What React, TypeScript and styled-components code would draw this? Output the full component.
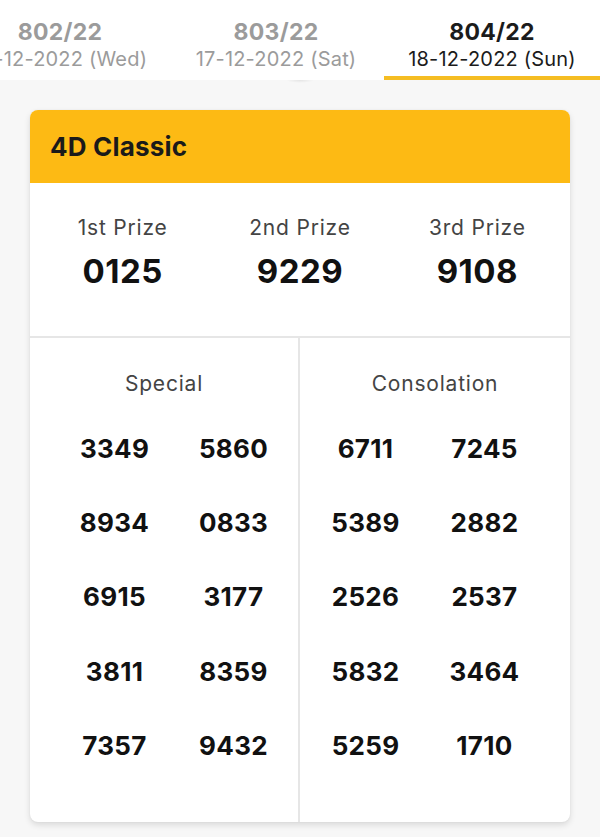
import styled, { createGlobalStyle } from 'styled-components'

const GlobalStyle = createGlobalStyle`
  html, body {
    margin: 0;
    padding: 0;
    background: #f7f7f7;
    font-family: Inter, "Noto Sans", Roboto, sans-serif;
  }
`

const draws = [
  { no: '802/22', date: '14-12-2022 (Wed)' },
  { no: '803/22', date: '17-12-2022 (Sat)' },
  { no: '804/22', date: '18-12-2022 (Sun)' },
]

const topPrizes = [
  { label: '1st Prize', num: '0125' },
  { label: '2nd Prize', num: '9229' },
  { label: '3rd Prize', num: '9108' },
]

const special = ['3349', '5860', '8934', '0833', '6915', '3177', '3811', '8359', '7357', '9432']
const consolation = ['6711', '7245', '5389', '2882', '2526', '2537', '5832', '3464', '5259', '1710']

const App = () => {
  return (
    <Page>
      <GlobalStyle />
      <TabBar>
        <TabRow>
          {draws.map((d, i) => (
            <Tab key={d.no} $active={i === draws.length - 1}>
              <TabNo>{d.no}</TabNo>
              <TabDate>{d.date}</TabDate>
            </Tab>
          ))}
        </TabRow>
      </TabBar>
      <Body>
        <ScrollHint />
        <Card>
          <CardHead>4D Classic</CardHead>
          <TopRow>
            {topPrizes.map((p) => (
              <TopCell key={p.label}>
                <PrizeLabel>{p.label}</PrizeLabel>
                <BigNum>{p.num}</BigNum>
              </TopCell>
            ))}
          </TopRow>
          <Split>
            <Half $side="left">
              <PrizeLabel>Special</PrizeLabel>
              <NumGrid $side="left">
                {special.map((n) => (
                  <Num key={n}>{n}</Num>
                ))}
              </NumGrid>
            </Half>
            <Half $side="right">
              <PrizeLabel>Consolation</PrizeLabel>
              <NumGrid $side="right">
                {consolation.map((n) => (
                  <Num key={n}>{n}</Num>
                ))}
              </NumGrid>
            </Half>
          </Split>
        </Card>
      </Body>
    </Page>
  )
}

export default App

const Page = styled.div`
  width: 600px;
  min-height: 837px;
  background: #f7f7f7;
  overflow: hidden;
`

const TabBar = styled.div`
  background: #ffffff;
  height: 80px;
  overflow: hidden;
`

const TabRow = styled.div`
  display: flex;
  margin-left: -48px;
`

const Tab = styled.div<{ $active?: boolean }>`
  width: 216px;
  height: 80px;
  flex-shrink: 0;
  box-sizing: border-box;
  padding-top: 19px;
  display: flex;
  flex-direction: column;
  align-items: center;
  color: ${(p) => (p.$active ? '#1b1b1b' : '#9b9b9b')};
  border-bottom: 4px solid ${(p) => (p.$active ? '#f5bd22' : 'transparent')};
`

const TabNo = styled.div`
  font-size: 23px;
  font-weight: 700;
  line-height: 27px;
  letter-spacing: 0.3px;
`

const TabDate = styled.div`
  font-size: 20px;
  line-height: 26px;
  letter-spacing: 0.2px;
`

const Body = styled.div`
  display: flex;
  flex-direction: column;
  align-items: center;
`

const ScrollHint = styled.div`
  width: 28px;
  height: 3px;
  margin: 0 0 27px 0;
  border-radius: 0 0 50% 50%;
  background: radial-gradient(ellipse at center top, rgba(0, 0, 0, 0.08), rgba(0, 0, 0, 0) 70%);
`

const Card = styled.div`
  width: 540px;
  height: 712px;
  background: #ffffff;
  border-radius: 8px;
  overflow: hidden;
  display: flex;
  flex-direction: column;
  box-shadow: 0 3px 6px rgba(0, 0, 0, 0.12), 0 0 2px rgba(0, 0, 0, 0.06);
`

const CardHead = styled.div`
  height: 73px;
  background: #fdba14;
  display: flex;
  align-items: center;
  padding-left: 20px;
  font-size: 26px;
  font-weight: 700;
  color: #1a1a1a;
  letter-spacing: 0.2px;
`

const TopRow = styled.div`
  height: 155px;
  display: grid;
  grid-template-columns: repeat(3, 1fr);
  padding: 30px 4px 0;
  box-sizing: border-box;
  border-bottom: 2px solid #e6e6e6;
`

const TopCell = styled.div`
  display: flex;
  flex-direction: column;
  align-items: center;
  gap: 7px;
`

const PrizeLabel = styled.div`
  font-size: 21px;
  line-height: 30px;
  color: #444444;
  letter-spacing: 0.8px;
`

const BigNum = styled.div`
  font-size: 33px;
  line-height: 42px;
  font-weight: 700;
  color: #111111;
  letter-spacing: 0.5px;
`

const Split = styled.div`
  flex: 1;
  display: grid;
  grid-template-columns: 1fr 1fr;
`

const Half = styled.div<{ $side: 'left' | 'right' }>`
  display: flex;
  flex-direction: column;
  align-items: center;
  padding-top: 31px;
  border-right: ${(p) => (p.$side === 'left' ? '2px solid #e6e6e6' : 'none')};
`

const NumGrid = styled.div<{ $side: 'left' | 'right' }>`
  margin-top: 12px;
  display: grid;
  grid-template-columns: 119px 119px;
  grid-auto-rows: 74.3px;
  align-items: center;
  justify-items: center;
  transform: translateX(${(p) => (p.$side === 'left' ? '10px' : '-10px')});
`

const Num = styled.div`
  font-size: 26px;
  font-weight: 700;
  color: #111111;
  letter-spacing: 0.3px;
`
